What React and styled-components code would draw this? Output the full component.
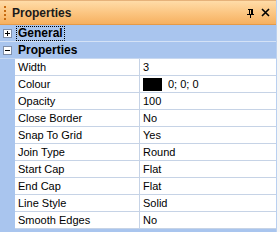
import React from 'react';
import styled, { createGlobalStyle } from 'styled-components';

const Global = createGlobalStyle`
  html, body {
    margin: 0;
    padding: 0;
    background: #f6f6f6;
    font-family: "Liberation Sans", Arial, sans-serif;
    font-size: 11px;
    color: #000;
  }
`;

const Panel = styled.div`
  width: 277px;
  height: 232px;
  overflow: hidden;
  background: #a9c5ee;
  border-right: 1px solid #b9d0f0;
  box-sizing: border-box;
`;

const TitleBar = styled.div`
  display: flex;
  align-items: center;
  height: 25px;
  box-sizing: border-box;
  padding: 0 6px 0 4px;
  background: linear-gradient(#ffdca8, #fbc47f 55%, #f6b060);
  border-top: 1px solid #e6b27a;
  border-bottom: 1px solid #e49a48;
`;

const Grip = styled.div`
  width: 2px;
  height: 14px;
  margin-right: 6px;
  background: repeating-linear-gradient(#c76a10 0 2px, transparent 2px 4px);
`;

const Title = styled.div`
  flex: 1;
  font-family: Tahoma, "Liberation Sans", sans-serif;
  font-weight: bold;
  font-size: 12px;
  color: #1a1a1a;
`;

const Tools = styled.div`
  display: flex;
  align-items: center;
  gap: 6px;
`;

const Category = styled.div`
  display: flex;
  align-items: center;
  height: 17px;
  box-sizing: border-box;
  border-bottom: 1px solid ${p => (p.$last ? '#c8d8f0' : '#d4e2f6')};
  background: #a9c5ee;
  padding-left: 3px;
  font-weight: bold;
  font-size: 12px;
`;

const Toggle = styled.span`
  position: relative;
  width: 9px;
  height: 9px;
  box-sizing: border-box;
  border: 1px solid #7f8ea8;
  background: #fff;
  margin-right: 5px;
  &::before {
    content: '';
    position: absolute;
    left: 1px;
    top: 3px;
    width: 5px;
    height: 1px;
    background: #000;
  }
  &::after {
    content: '';
    display: ${p => (p.$open ? 'none' : 'block')};
    position: absolute;
    left: 3px;
    top: 1px;
    width: 1px;
    height: 5px;
    background: #000;
  }
`;

const CatLabel = styled.span`
  padding: 0 1px;
  line-height: 13px;
  outline: ${p => (p.$focus ? '1px dotted #000' : 'none')};
`;

const Row = styled.div`
  display: grid;
  grid-template-columns: 15px 125px 1fr;
  height: 17px;
`;

const Cell = styled.div`
  display: flex;
  align-items: center;
  gap: 6px;
  background: #fff;
  padding-left: 3px;
  box-sizing: border-box;
  border-bottom: 1px solid #c6d3e6;
  border-right: ${p => (p.$name ? '1px solid #c6d3e6' : 'none')};
`;

const Swatch = styled.span`
  width: 19px;
  height: 13px;
  background: #000;
`;

const rows = [
  ['Width', '3'],
  ['Colour', '0; 0; 0', true],
  ['Opacity', '100'],
  ['Close Border', 'No'],
  ['Snap To Grid', 'Yes'],
  ['Join Type', 'Round'],
  ['Start Cap', 'Flat'],
  ['End Cap', 'Flat'],
  ['Line Style', 'Solid'],
  ['Smooth Edges', 'No'],
];

const PinIcon = () => (
  <svg width="9" height="10" viewBox="0 0 9 10">
    <path d="M2 1h5M3 1v5M6 1v5M5 1v5M1 6h7M4.5 6v4" stroke="#000" strokeWidth="1" fill="none" shapeRendering="crispEdges" />
  </svg>
);

const CloseIcon = () => (
  <svg width="9" height="9" viewBox="0 0 9 9">
    <path d="M1 1l7 7M8 1l-7 7" stroke="#000" strokeWidth="1.6" fill="none" />
  </svg>
);

export default function App() {
  return (
    <>
      <Global />
      <Panel>
        <TitleBar>
          <Grip />
          <Title>Properties</Title>
          <Tools>
            <PinIcon />
            <CloseIcon />
          </Tools>
        </TitleBar>
        <Category>
          <Toggle />
          <CatLabel $focus>General</CatLabel>
        </Category>
        <Category $last>
          <Toggle $open />
          <CatLabel>Properties</CatLabel>
        </Category>
        {rows.map(([name, value, swatch]) => (
          <Row key={name}>
            <span />
            <Cell $name>{name}</Cell>
            <Cell>
              {swatch && <Swatch />}
              {value}
            </Cell>
          </Row>
        ))}
      </Panel>
    </>
  );
}
